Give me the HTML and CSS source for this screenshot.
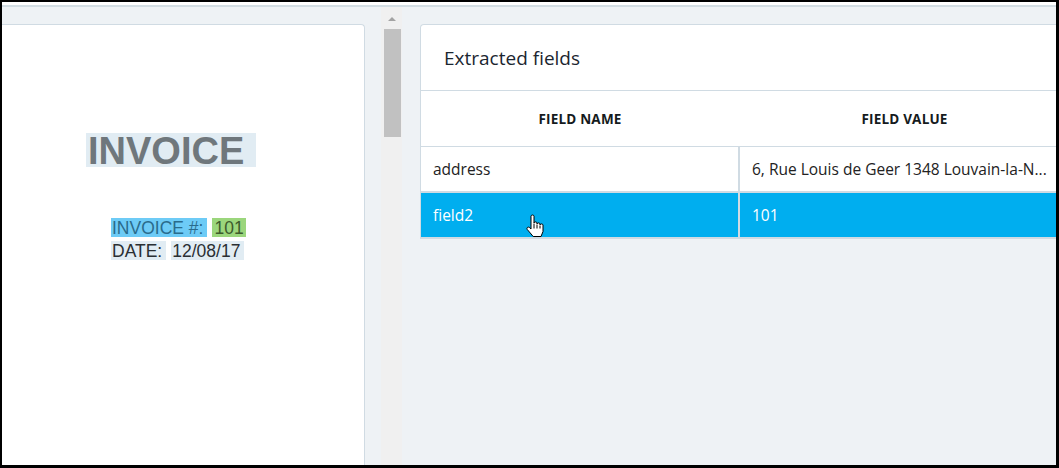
FILE: index.html
```html
<!DOCTYPE html>
<html lang="en">
<head>
  <meta charset="UTF-8" />
  <meta name="viewport" content="width=device-width, initial-scale=1.0" />
  <title>Extracted fields</title>
  <link rel="stylesheet" href="styles.css">
</head>
<body>

  <div class="frame">
    <div class="topstrip"></div>

    <div class="workspace">
      <!-- left: document preview -->
      <section class="doc-card">
        <div class="doc">
          <div class="doc-title"><span class="hl hl-plain">INVOICE</span></div>
          <div class="doc-line">
            <span class="hl hl-blue">INVOICE #:</span>
            <span class="hl hl-green">101</span>
          </div>
          <div class="doc-line">
            <span class="hl hl-plain">DATE:</span>
            <span class="hl hl-plain">12/08/17</span>
          </div>
        </div>
      </section>

      <div class="scroll">
        <div class="scroll-arrow"></div>
        <div class="scroll-thumb"></div>
      </div>

      <!-- right: extracted fields -->
      <section class="fields-card">
        <h2 class="fields-title">Extracted fields</h2>
        <table class="fields">
          <thead>
            <tr>
              <th>Field name</th>
              <th>Field value</th>
            </tr>
          </thead>
          <tbody>
            <tr>
              <td>address</td>
              <td>6, Rue Louis de Geer 1348 Louvain-la-N...</td>
            </tr>
            <tr class="selected">
              <td class="with-cursor">field2
                <svg class="cursor" width="19" height="24" viewBox="0 0 19 24">
                  <path d="M5 2.2C5 0.6 8 0.6 8 2.2V9C8 7.6 11 7.6 11 9V10C11 8.6 14 8.6 14 10V11C14 9.6 17 9.6 17 11V17.5L15 22.5H7.2L1.2 15.4C0.3 13.9 2 12.4 3.3 13.4L5 15Z" fill="#fff" stroke="#000" stroke-width="1" stroke-linejoin="round"/>
                  <path d="M8 9.5V14.5M11 10.5V14.5M14 11.5V14.5" stroke="#000" stroke-width="1" fill="none"/>
                </svg>
              </td>
              <td>101</td>
            </tr>
          </tbody>
        </table>
      </section>
    </div>
  </div>

</body>
</html>
```

FILE: styles.css
```css
:root {
  --bg: #eef2f5;
  --line: #d0dbe3;
  --text: #1f2a33;
  --accent: #00aeef;
}

html, body {
  margin: 0;
  height: 100%;
  overflow: hidden;
}

body {
  font-family: "Open Sans", "Noto Sans", sans-serif;
  color: var(--text);
  background: #fff;
}

.frame {
  box-sizing: border-box;
  width: 1059px;
  height: 468px;
  border: 3px solid #000;
  border-top-width: 2px;
  border-left-width: 2px;
  display: flex;
  flex-direction: column;
  overflow: hidden;
}

.topstrip {
  height: 3px;
  background: #fff;
  border-bottom: 2px solid #d2dde3;
}

.workspace {
  flex: 1;
  display: flex;
  align-items: flex-start;
  background: var(--bg);
  padding-top: 17px;
  min-height: 0;
}

/* document preview */

.doc-card {
  box-sizing: border-box;
  width: 363px;
  flex-shrink: 0;
  align-self: stretch;
  background: #fff;
  border-top: 1px solid var(--line);
  border-right: 1px solid var(--line);
  border-top-right-radius: 4px;
}

.doc {
  padding: 108px 0 0 84px;
  font-family: "Liberation Sans", Arial, sans-serif;
}

.hl {
  display: inline-block;
}

.hl-plain { background: #e1ecf3; }
.hl-blue { background: #6dcbf6; color: #2a6b8c; }
.hl-green { background: #9bd67c; color: #3d5a2c; }

.doc-title .hl {
  height: 34px;
  line-height: 36px;
  padding: 0 12px 0 2px;
  font-size: 38px;
  font-weight: bold;
  color: #6f777c;
}

.doc-title {
  margin-bottom: 50px;
}

.doc-line {
  display: flex;
  gap: 5px;
  margin-left: 25px;
  margin-bottom: 4px;
  font-size: 17.5px;
  color: #2a2f33;
}

.doc-line .hl {
  height: 19px;
  line-height: 20px;
  padding: 0 4px 0 1px;
}

.doc-line .hl-green { padding: 0 2px 0 2px; }

/* fake scrollbar */

.scroll {
  width: 21px;
  flex-shrink: 0;
  margin: -17px 18px 0 16px;
  align-self: stretch;
  background: #f0f0f0;
  display: flex;
  flex-direction: column;
  align-items: center;
}

.scroll-arrow {
  margin-top: 10px;
  width: 0;
  height: 0;
  border-left: 4px solid transparent;
  border-right: 4px solid transparent;
  border-bottom: 4px solid #a3a3a3;
}

.scroll-thumb {
  margin-top: 8px;
  margin-left: 2px;
  width: 17px;
  height: 108px;
  background: #c1c1c1;
}

/* extracted fields card */

.fields-card {
  width: 660px;
  flex-shrink: 0;
  background: #fff;
  border: 1px solid var(--line);
  border-bottom: 0;
  border-top-left-radius: 4px;
}

.fields-title {
  margin: 0;
  height: 65px;
  line-height: 66px;
  padding-left: 23px;
  font-size: 19px;
  font-weight: normal;
  color: #1b2630;
  border-bottom: 1px solid var(--line);
}

.fields {
  border-collapse: collapse;
  table-layout: fixed;
  width: 649px;
}

.fields th {
  height: 55px;
  padding: 0;
  font-size: 13.5px;
  letter-spacing: 0.2px;
  font-weight: bold;
  text-transform: uppercase;
  color: #151b20;
  border-bottom: 1px solid var(--line);
}

.fields th:first-child { width: 318px; }

.fields td {
  height: 44px;
  padding: 0 12px;
  font-size: 15.5px;
  color: #222;
  white-space: nowrap;
  overflow: hidden;
  border-bottom: 2px solid var(--line);
}

.fields td:first-child {
  border-right: 2px solid var(--line);
}

.fields tr.selected td {
  background: var(--accent);
  color: #fff;
}

.with-cursor {
  position: relative;
}

.cursor {
  position: absolute;
  left: 105px;
  top: 21px;
}
```
